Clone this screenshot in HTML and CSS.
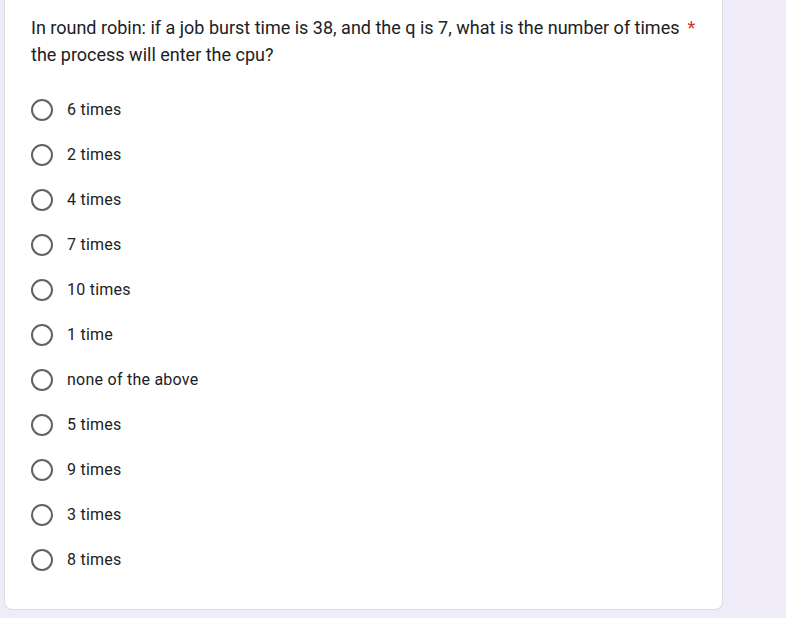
FILE: index.html
```html
<!DOCTYPE html>
<html>
<head>
<meta charset="utf-8">
<link rel="stylesheet" href="styles.css">
</head>
<body>
<div class="page">
  <div class="card">
    <div class="question">
      <span class="qtext">In round robin: if a job burst time is 38, and the q is 7, what is the number of times</span><span class="req">*</span>
      <br><span class="qtext">the process will enter the cpu?</span>
    </div>
    <div class="options">
      <div class="option"><span class="radio"></span><span class="label">6 times</span></div>
      <div class="option"><span class="radio"></span><span class="label">2 times</span></div>
      <div class="option"><span class="radio"></span><span class="label">4 times</span></div>
      <div class="option"><span class="radio"></span><span class="label">7 times</span></div>
      <div class="option"><span class="radio"></span><span class="label">10 times</span></div>
      <div class="option"><span class="radio"></span><span class="label">1 time</span></div>
      <div class="option"><span class="radio"></span><span class="label">none of the above</span></div>
      <div class="option"><span class="radio"></span><span class="label">5 times</span></div>
      <div class="option"><span class="radio"></span><span class="label">9 times</span></div>
      <div class="option"><span class="radio"></span><span class="label">3 times</span></div>
      <div class="option"><span class="radio"></span><span class="label">8 times</span></div>
    </div>
  </div>
</div>
</body>
</html>
```
FILE: styles.css
```css
html, body {
  margin: 0;
  padding: 0;
  background: #f0ebf8;
  font-family: Roboto, "Liberation Sans", sans-serif;
}
.page {
  padding-left: 4px;
  height: 618px;
  overflow: hidden;
}
.card {
  width: 719px;
  background: #fff;
  border: 1px solid #dadce0;
  border-top: none;
  border-radius: 0 0 8px 8px;
  padding: 14px 0 24px 26px;
  box-sizing: border-box;
  height: 610px;
}
.question {
  font-size: 18px;
  line-height: 27px;
  color: #202124;
}
.req {
  color: #d93025;
  margin-left: 8px;
}
.options {
  margin-top: 19px;
}
.option {
  display: flex;
  align-items: center;
  height: 45px;
}
.radio {
  width: 22px;
  height: 22px;
  box-sizing: border-box;
  border: 2px solid #5f6368;
  border-radius: 50%;
  margin-left: 0;
  margin-right: 14px;
  flex: none;
}
.label {
  font-size: 16px;
  color: #202124;
  letter-spacing: 0.25px;
}
```
